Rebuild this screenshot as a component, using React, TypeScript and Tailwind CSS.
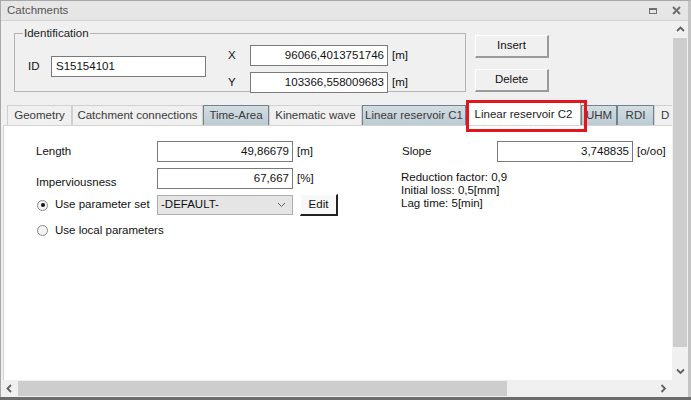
import React from "react";

const Chev = ({ dir }: { dir: "up" | "down" | "left" | "right" }) => {
  const paths: Record<string, string> = {
    up: "M1 5 L4.5 1.5 L8 5",
    down: "M1 1.5 L4.5 5 L8 1.5",
    left: "M5 1 L1.5 4.5 L5 8",
    right: "M1.5 1 L5 4.5 L1.5 8",
  };
  const vertical = dir === "up" || dir === "down";
  return (
    <svg
      width={vertical ? 9 : 7}
      height={vertical ? 7 : 9}
      viewBox={vertical ? "0 0 9 7" : "0 0 7 9"}
    >
      <path d={paths[dir]} fill="none" stroke="#606060" strokeWidth="1.8" />
    </svg>
  );
};

const Input = ({
  value,
  w,
  left,
}: {
  value: string;
  w: string;
  left?: boolean;
}) => (
  <div
    className={`${w} h-[21px] bg-white border border-[#7a7a7a] flex items-center ${
      left ? "justify-start pl-[4px]" : "justify-end pr-[3px]"
    } text-[11.5px] text-[#111] leading-none`}
  >
    {value}
  </div>
);

const Radio = ({ checked }: { checked?: boolean }) => (
  <div className="w-[11px] h-[11px] rounded-full border border-[#8a8a8a] bg-[#f4f4f4] flex items-center justify-center">
    {checked && <div className="w-[4px] h-[4px] rounded-full bg-[#111]" />}
  </div>
);

type Tab = { label: string; w: string; kind: "plain" | "blue" | "sel" };

const tabs: Tab[] = [
  { label: "Geometry", w: "w-[65px]", kind: "plain" },
  { label: "Catchment connections", w: "w-[131px]", kind: "plain" },
  { label: "Time-Area", w: "w-[66px]", kind: "blue" },
  { label: "Kinematic wave", w: "w-[93px]", kind: "plain" },
  { label: "Linear reservoir C1", w: "w-[104px]", kind: "blue" },
  { label: "Linear reservoir C2", w: "w-[115px]", kind: "sel" },
  { label: "UHM", w: "w-[36px]", kind: "blue" },
  { label: "RDI", w: "w-[37px]", kind: "blue" },
];

export default function App() {
  return (
    <div className="w-[691px] h-[400px] overflow-hidden bg-[#f0f0f0] font-['Liberation_Sans',Arial,sans-serif] text-[11px] text-[#111] flex flex-col">
      <div className="flex-1 min-h-0 flex flex-col border-t border-l border-r-[3px] border-t-[#a8a8a8] border-l-[#a8a8a8] border-r-[#c4c4c4]">
        {/* Title bar */}
        <div className="h-[20px] shrink-0 bg-[#e6e6e6] border-b border-[#d2d2d2] flex items-center pl-[6px] pr-[7px] text-[11.5px] text-[#555]">
          <span className="flex-1">Catchments</span>
          <div className="w-[8px] h-[6px] border-[#707070] border-t-[2px] border-x border-b mr-[15px]" />
          <svg width="9" height="9" viewBox="0 0 9 9">
            <path d="M1 1 L8 8 M8 1 L1 8" stroke="#707070" strokeWidth="2" />
          </svg>
        </div>

        {/* Middle */}
        <div className="flex-1 min-h-0 flex">
          <div className="w-[671px] flex flex-col min-w-0">
            {/* top section */}
            <div className="h-[81px] shrink-0 flex items-start">
              <div className="relative ml-[13px] mt-[12px] w-[452px] h-[59px] border border-[#b4b4b4]">
                <span className="absolute left-[8px] -top-[8px] bg-[#f0f0f0] px-[1px] text-[11.5px] leading-[14px] text-[#222]">
                  Identification
                </span>
                <div className="flex items-start">
                  <div className="ml-[13px] mt-[22px] flex items-center">
                    <span className="w-[23px] text-[11.5px]">ID</span>
                    <Input value="S15154101" w="w-[155px]" left />
                  </div>
                  <div className="ml-[22px] mt-[11px] flex flex-col gap-[6px]">
                    <div className="flex items-center">
                      <span className="w-[22px] text-[11.5px]">X</span>
                      <Input value="96066,4013751746" w="w-[138px]" />
                      <span className="ml-[4px] text-[11.5px]">[m]</span>
                    </div>
                    <div className="flex items-center">
                      <span className="w-[22px] text-[11.5px]">Y</span>
                      <Input value="103366,558009683" w="w-[138px]" />
                      <span className="ml-[4px] text-[11.5px]">[m]</span>
                    </div>
                  </div>
                </div>
              </div>
              <div className="ml-[9px] mt-[14px] flex flex-col gap-[11px]">
                <div className="w-[74px] h-[23px] bg-[#f0f0f0] border-t border-l border-white border-r-2 border-b-2 border-r-[#9a9a9a] border-b-[#9a9a9a] flex items-center justify-center text-[11.5px]">
                  Insert
                </div>
                <div className="w-[74px] h-[23px] bg-[#f0f0f0] border-t border-l border-white border-r-2 border-b-2 border-r-[#9a9a9a] border-b-[#9a9a9a] flex items-center justify-center text-[11.5px]">
                  Delete
                </div>
              </div>
            </div>

            {/* tab strip */}
            <div className="h-[23px] shrink-0 flex items-end pl-[6px] relative z-10 overflow-hidden">
              {tabs.map((t) =>
                t.kind === "sel" ? (
                  <div
                    key={t.label}
                    className={`${t.w} h-[24px] -mb-[1px] shrink-0 relative bg-white border border-b-0 border-[#b0b0b0] flex items-center justify-center text-[11.5px] text-[#222]`}
                  >
                    {t.label}
                  </div>
                ) : (
                  <div
                    key={t.label}
                    className={`${t.w} h-[20px] shrink-0 border border-b-0 flex items-center justify-center text-[11.5px] text-[#3a3a3a] ${
                      t.kind === "blue"
                        ? "bg-gradient-to-b from-[#d3dde2] to-[#bccbd3] border-[#6f838d]"
                        : "bg-[#f0f0f0] border-[#d0d0d0]"
                    }`}
                  >
                    <span className="whitespace-nowrap">{t.label}</span>
                  </div>
                )
              )}
              <div className="w-[30px] h-[20px] shrink-0 border border-b-0 border-r-0 border-[#d0d0d0] bg-[#f0f0f0] flex items-center pl-[6px] text-[11.5px] text-[#3a3a3a]">
                D
              </div>
            </div>

            {/* panel */}
            <div className="flex-1 min-h-0 ml-[2px] bg-white border-t border-l border-[#d4d4d4] relative">
              {/* red annotation box around selected tab */}
              <div className="absolute left-[462px] -top-[26px] w-[121px] h-[32px] border-[3px] border-[#e3161d] z-20" />
              <div className="pt-[15px] pl-[32px] flex text-[11.5px]">
                <div className="w-[365px] flex flex-col">
                  <div className="flex items-center h-[21px]">
                    <span className="w-[121px]">Length</span>
                    <Input value="49,86679" w="w-[136px]" />
                    <span className="ml-[4px]">[m]</span>
                  </div>
                  <div className="flex items-end mt-[6px]">
                    <span className="w-[121px] leading-[14px]">Imperviousness</span>
                    <Input value="67,667" w="w-[136px]" />
                    <span className="ml-[4px] self-center">[%]</span>
                  </div>
                  <div className="flex items-center mt-[5px] h-[22px]">
                    <div className="w-[121px] flex items-center">
                      <div className="ml-[1px]">
                        <Radio checked />
                      </div>
                      <span className="ml-[7px]">Use parameter set</span>
                    </div>
                    <div className="w-[136px] h-[20px] bg-[#e5e5e5] border border-[#adadad] flex items-center pl-[3px] pr-[6px]">
                      <span className="flex-1">-DEFAULT-</span>
                      <svg width="9" height="6" viewBox="0 0 9 6">
                        <path d="M1 1 L4.5 4.5 L8 1" fill="none" stroke="#606060" strokeWidth="1" />
                      </svg>
                    </div>
                    <div className="ml-[7px] w-[38px] h-[22px] bg-[#f8f8f8] border-t border-l border-white border-r-2 border-b-2 border-r-[#222] border-b-[#222] flex items-center justify-center">
                      Edit
                    </div>
                  </div>
                  <div className="flex items-center mt-[8px] h-[13px]">
                    <div className="ml-[1px]">
                      <Radio />
                    </div>
                    <span className="ml-[7px]">Use local parameters</span>
                  </div>
                </div>
                <div className="flex flex-col">
                  <div className="flex items-center h-[21px]">
                    <span className="w-[96px] pl-[1px]">Slope</span>
                    <Input value="3,748835" w="w-[136px]" />
                    <span className="ml-[4px]">[o/oo]</span>
                  </div>
                  <div className="mt-[9px] leading-[13px]">
                    <div>Reduction factor: 0,9</div>
                    <div>Initial loss: 0,5[mm]</div>
                    <div>Lag time: 5[min]</div>
                  </div>
                </div>
              </div>
            </div>
          </div>

          {/* vertical scrollbar */}
          <div className="w-[16px] flex flex-col bg-[#f0f0f0]">
            <div className="h-[17px] flex items-center justify-center">
              <Chev dir="up" />
            </div>
            <div className="h-[309px] mx-[1px] bg-[#cdcdcd]" />
            <div className="flex-1" />
            <div className="h-[17px] flex items-center justify-center">
              <Chev dir="down" />
            </div>
          </div>
        </div>

        {/* horizontal scrollbar row */}
        <div className="h-[17px] shrink-0 flex bg-[#f0f0f0]">
          <div className="w-[671px] flex items-center">
            <div className="w-[17px] h-full flex items-center justify-center">
              <Chev dir="left" />
            </div>
            <div className="w-[489px] h-[15px] bg-[#cdcdcd]" />
            <div className="flex-1" />
            <div className="w-[17px] h-full flex items-center justify-center">
              <Chev dir="right" />
            </div>
          </div>
          <div className="flex-1" />
        </div>
      </div>
      <div className="h-[3px] shrink-0 bg-[#6b6b6b]" />
    </div>
  );
}
